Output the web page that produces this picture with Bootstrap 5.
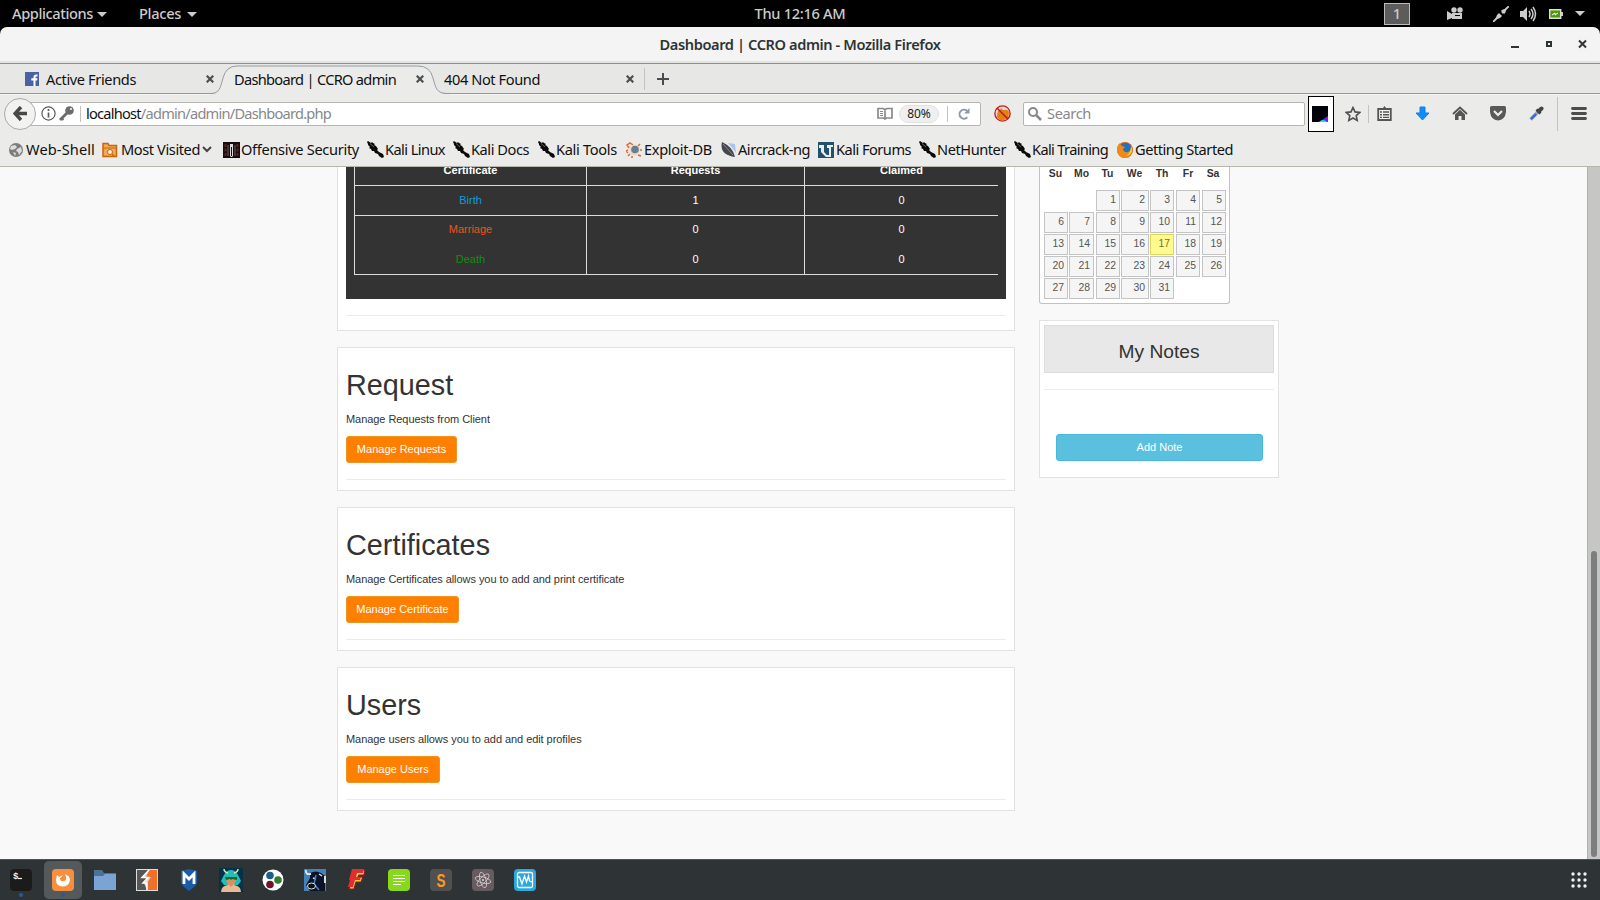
<!DOCTYPE html>
<html lang="en"><head><meta charset="utf-8"><title>Dashboard | CCRO admin</title>
<link href="https://cdn.jsdelivr.net/npm/bootstrap@5.3.0/dist/css/bootstrap.min.css" rel="stylesheet">
<style>
body{width:1600px;height:900px;overflow:hidden;background:#000;font-family:"Noto Sans","Open Sans",sans-serif;font-size:14.6px;line-height:20px;color:#111}
svg{display:block;flex:none}
.lbl{white-space:nowrap;flex:none;display:block}
.sysbar{height:27px;color:#ccc;font-weight:500;padding:0 15px 2px 12px;display:grid;grid-template-columns:1fr 1fr 1fr}
.tri{width:0;height:0;border:5px solid transparent;border-top:5px solid #ccc;border-bottom:0}
.wsnum{width:26px;height:22px;border:1px solid #bbb;background:#5c5c5c;line-height:19px}
.titlebar{height:37px;background:#f4f4f4;border-bottom:1px solid #8e8f8a;border-radius:7px 7px 0 0;color:#2e3436;box-shadow:inset 0 -2px #e2e2df;padding-bottom:2px}
.tabstrip{height:30px;background:#e7e7e5;border-bottom:1px solid #979994;display:grid;grid-template-columns:212px 235px 198px 1fr}
.tabstrip>div{height:30px}
.navtools{height:42px;background:#ebebe9;padding-left:4px;padding-bottom:4px;border-top:1px solid #f4f4f3}
.backbtn{width:32px;height:32px;border-radius:50%;border:1px solid #aaaba5;background:#f2f2f1;z-index:2}
.urlbox{height:24px;background:#fff;border:1px solid #b6b6ae;border-radius:2px}
.sep{width:1px;background:#c2c3bd;flex:none}
.zoomp{width:40px;height:18px;border-radius:9px;background:#efefef;border:1px solid #e2e2e2;font-size:12px;line-height:16px;color:#222}
.bmarks{height:31px;background:#ebebe9;border-bottom:1px solid #b5b6ac;padding-left:9px;display:grid;grid-template-columns:93px 121px 144px 86px 85px 88px 95px 97px 101px 95px 103px 130px;padding-bottom:3px}
.bmarks>div{display:flex;align-items:center}
.bmarks .lbl{margin-left:1px}
.bmarks .lbl,.navtools .lbl{position:relative;margin-top:-1px}
.viewport{height:692px;background:#f9f9f9;overflow:hidden;font-family:"Liberation Sans",Arial,sans-serif;font-size:11px;line-height:16px;color:#333}
.maincol{width:678px;margin-left:337px}
.panel{background:#fff;border:1px solid #e2e2e2;padding:0 8px;margin-bottom:16px;height:144px}
.panel.first{height:164px;border-top:0}
.darkbox{background:#333;height:132px;color:#fff;padding:0 8px}
.certs{display:grid;grid-template-columns:232px 218px 193px;grid-template-rows:19px 30px 30px 28px;border-left:1px solid #ddd;border-bottom:1px solid #ddd;height:108px;text-align:center;width:644px}
.certs>div{border-right:1px solid #ddd;line-height:29px}
.certs>div:nth-child(3n){border-right:0}
.certs .ln{border-bottom:1px solid #ddd}
.certs .hd{line-height:14px;font-weight:bold;margin-top:-4px}
.ruled{height:1px;background:#ebebeb}
.panel h1{font-size:28.8px;line-height:32px;margin:0;padding-top:21px;font-weight:400;color:#333}
.panel p{margin:10px 0 9px;line-height:16px;letter-spacing:-.06px}
.btn.obtn{background:#ff8000;border:1px solid #f0931f;color:#fff;font-size:11px;line-height:15px;height:27px;padding:4px 0;border-radius:3px;display:block;white-space:nowrap}
.sidecol{margin-left:24px;width:240px}
.calbox{width:191px;height:137px;background:#fff;border:1px solid #c2c2c2;border-top:0;border-radius:0 0 3px 3px;font-size:10.4px;color:#555;padding:0 0 0 4px}
.cal{display:grid;grid-template-columns:25px 27px 25px 29px 26px 26px 24px;grid-template-rows:23px repeat(5,22px)}
.cal b{text-align:center;line-height:14px;color:#333;margin-left:-2px}
.cal i{font-style:normal;text-align:right;border:1px solid #c4c4c4;background:#f5f5f5;height:21px;line-height:18px;padding-right:3px;margin-right:1px}
.cal i.c2,.cal i.c5,.cal i.c6{margin-right:2px}.cal i.c7{margin-right:0}
.cal i.now{background:#fffa90;border-color:#dad55e;color:#777620}
.notes{height:158px;margin-top:16px;background:#fff;border:1px solid #e2e2e2;padding:4px}
.notes h4{background:#e8e8e8;border:1px solid #dcdcdc;height:48px;font-size:19.2px;line-height:51px;margin:0 0 16px;font-weight:400}
.btn.nbtn{background:#5bc0de;border:1px solid #46b8da;color:#fff;font-size:11px;line-height:15px;height:27px;width:207px;padding:4px;border-radius:3px;display:block;margin:44px 0 0 12px}
.scroller{width:13px;background:#c6c6c5;border-left:1px solid #b0b2b1;padding:384px 0 0 3px}
.thumb{width:6px;height:306px;border-radius:3px;background:#7b7f80}
.dockbar{height:42px;background:#2e3436;border-top:1px solid #50504e;padding-bottom:2px}
.dk{width:42px;height:40px;display:flex;align-items:center;justify-content:center}
.dk.on>.tile{width:38px;height:38px;border-radius:5px;background:#545a5b;display:flex;align-items:center;justify-content:center}
.dot{left:19px;bottom:3px;width:4px;height:4px;border-radius:50%;background:#215d9c}
</style></head>
<body>
<svg width="0" height="0" class="position-absolute"><defs>
<symbol id="kali" viewBox="0 0 17 17"><path d="M0 1L1 0l3 2 1-1 1 1 2 1-1 1 2 1 2 3-1 1 2 2 4 2 1 3-2 1-3-2-1-2-3-1-1-2-2 0-1-2-2-1 1-1-2-2 0-1z" fill="#0a0a0a"/><path d="M3 2.500l4 3.500" stroke="#888" stroke-width=".7"/></symbol>
<symbol id="tabx" viewBox="0 0 8 8"><path d="M.7.7l6.600 6.600M7.300.7L.7 7.300" stroke="#4c5052" stroke-width="2.200"/></symbol>
</defs></svg>
<div class="sysbar">
 <div class="d-flex align-items-center"><span class="lbl" data-w="81">Applications</span><span class="tri ms-1 mt-1"></span><span class="lbl" data-w="42" style="margin-left:32px">Places</span><span class="tri mt-1" style="margin-left:6px"></span></div>
 <div class="d-flex align-items-center justify-content-center"><span class="lbl" data-w="91" style="margin-left:3px">Thu 12:16 AM</span></div>
 <div class="d-flex align-items-center justify-content-end" style="padding-top:2px">
  <div class="wsnum text-center" style="margin-right:37px">1</div>
  <svg style="margin-right:29px" width="17" height="13" viewBox="0 0 17 13" fill="#ccc"><path d="M0 4l5 3v-1h10v6H5v-1l-5 2z"/><circle cx="7" cy="3" r="2.700"/><circle cx="13" cy="3" r="2.700"/><path d="M8 8.500h5" stroke="#000"/></svg>
  <svg style="margin-right:11px" width="16" height="16" viewBox="0 0 16 16"><path d="M0 16l3-3M13 3l3-3M2.500 13.500L7 9M9 7l4-4" stroke="#ccc" stroke-width="1.800"/><path d="M3 13q0-4 3-6l3 3q-2 3-6 3zM8 5q1-2 5-2 0 4-2 5z" fill="#ccc"/></svg>
  <svg style="margin-right:12px" width="17" height="16" viewBox="0 0 17 16"><path d="M0 5h3l4-4v14L3 11H0z" fill="#ccc"/><path d="M9 5q2 3 0 6M11 3q4 5 0 10M13 1q5 7 0 14" fill="none" stroke="#ccc" stroke-width="1.500"/></svg>
  <svg style="margin-right:12px" width="14" height="10" viewBox="0 0 14 10"><path d="M.7.7h11v8.600H.7z" fill="#4e9a06" stroke="#ddd" stroke-width="1.400"/><path d="M12 3h2v4h-2z" fill="#ccc"/><path d="M3 6l3-2v2l3-2" stroke="#fff" fill="none"/></svg>
  <span class="tri"></span></div>
</div>
<div class="titlebar d-flex align-items-center">
 <div style="width:580px" class="ms-auto text-center d-flex justify-content-center fw-semibold"><span class="lbl" data-w="281">Dashboard | CCRO admin - Mozilla Firefox</span></div>
 <div class="d-flex align-items-center justify-content-end gap-0" style="width:510px;padding-right:13px">
 <svg width="76" height="10" viewBox="0 0 76 10"><path d="M0 8h8" stroke="#2e3436" stroke-width="2"/><path d="M36 3h4v4h-4z" fill="none" stroke="#2e3436" stroke-width="2"/><path d="M68 1.500l7 7m0-7l-7 7" stroke="#2e3436" stroke-width="2"/></svg></div>
</div>
<div class="tabstrip">
 <div class="d-flex align-items-center" style="padding-left:25px"><svg width="14" height="14" viewBox="0 0 14 14"><path fill="#4862a3" d="M0 0h14v14H0z"/><path d="M8.500 14V8.500H6.300V6.300H8.500V5q0-2.500 2.600-2.500h1.400v2h-1q-1 0-1 1v.8h2l-.4 2.200h-1.600V14z" fill="#fff"/></svg><span class="lbl" data-w="90" style="margin-left:7px">Active Friends</span><svg style="margin-left:70px" width="8" height="8"><use href="#tabx"/></svg></div>
 <div class="position-relative d-flex align-items-center">
  <svg class="position-absolute" style="left:-2px;top:0" width="240" height="31" viewBox="0 0 240 31"><path d="M0 30C10 30 10 24 13 14Q16 2 27 2H208Q220 2 223 14C226 24 226 30 240 30v1H0z" fill="#ebebe9"/><path d="M0 29.500C10 29.500 10 24 13 14Q16 2 27 2H208Q220 2 223 14C226 24 226 29.500 238 29.500" fill="none" stroke="#969ba2"/></svg>
  <span class="lbl position-relative" data-w="162" style="margin-left:22px">Dashboard | CCRO admin</span><svg class="position-relative" style="margin-left:20px" width="8" height="8"><use href="#tabx"/></svg></div>
 <div class="d-flex align-items-center"><span class="lbl position-relative" data-w="96" style="margin-left:-3px">404 Not Found</span><svg style="margin-left:86px" width="8" height="8"><use href="#tabx"/></svg><span class="sep ms-auto" style="height:22px"></span></div>
 <div class="d-flex align-items-center" style="padding-left:12px"><svg width="12" height="12"><path d="M6 0v12M0 6h12" stroke="#4a4d4f" stroke-width="2"/></svg></div>
</div>
<div class="navtools d-flex align-items-center">
 <div class="backbtn d-flex align-items-center justify-content-center flex-shrink-0"><svg width="14" height="15" viewBox="0 0 14 15"><path d="M8 1L2 7.500 8 14M2 7.500h12" fill="none" stroke="#484848" stroke-width="3.400"/></svg></div>
 <div class="urlbox d-flex align-items-center" style="width:953px;margin-left:-8px;padding-left:12px">
  <svg width="15" height="15" viewBox="0 0 15 15"><circle cx="7.500" cy="7.500" r="6.600" fill="none" stroke="#5a5a5a" stroke-width="1.200"/><path d="M7.500 6.500v5M7.500 3v2" stroke="#5a5a5a" stroke-width="1.700"/></svg>
  <svg style="margin-left:3px" width="15" height="15" viewBox="0 0 15 15"><path d="M1 14L8 7" stroke="#6c6c6c" stroke-width="2.800"/><circle cx="10.500" cy="4.500" r="4.300" fill="#6c6c6c"/><circle cx="12" cy="3" r="1" fill="#fff"/><path d="M2.500 12l2 2" stroke="#6c6c6c" stroke-width="2"/></svg>
  <span class="sep" style="height:16px;margin:0 5px 0 6px"></span>
  <span class="lbl" data-w="245">localhost<span style="color:#888">/admin/admin/Dashboard.php</span></span>
  <div class="ms-auto d-flex align-items-center">
  <svg width="16" height="13" viewBox="0 0 16 13"><path d="M1 1.500h5l2 1 2-1h5v9.500h-5.500L8 12l-1.500-1H1zM8 2.500V12" fill="none" stroke="#8a8a8a" stroke-width="1.700"/><path d="M3 4.500h3M3 6.500h3M3 8.500h3" stroke="#8a8a8a"/></svg>
  <div class="zoomp text-center" style="margin:0 8px 0 6px">80%</div><span class="sep" style="height:16px"></span>
  <svg style="margin:0 10px 0 10px" width="12" height="12" viewBox="0 0 12 12"><path d="M9.300 9.300A4.500 4.500 0 1 1 9 2.800" fill="none" stroke="#8e9aa6" stroke-width="2"/><path d="M11.500 0v5.500H6z" fill="#8e9aa6"/></svg></div>
 </div>
 <svg style="margin-left:13px" width="17" height="17" viewBox="0 0 17 17"><circle cx="8.500" cy="8.500" r="7.500" fill="#e9ddd9"/><path d="M3 12q0-7 3-7l1-2 2 2q6-1 6 3l-1 5-4 2H6z" fill="#e3820c"/><circle cx="8.500" cy="8.500" r="7.600" fill="none" stroke="#cc1c1c" stroke-width="1.400"/><path d="M3 3l11 11" stroke="#c11" stroke-width="1.500"/></svg>
 <div class="urlbox d-flex align-items-center" style="width:282px;margin-left:12px;padding-left:4px;color:#888"><svg width="14" height="14" viewBox="0 0 14 14"><circle cx="5" cy="5" r="4" fill="none" stroke="#888" stroke-width="2"/><path d="M8 8l5 5" stroke="#888" stroke-width="2.500"/></svg><span class="lbl" data-w="44" style="margin-left:5px">Search</span></div>
 <div class="d-flex align-items-center justify-content-center bg-white" style="width:26px;height:36px;border:1px solid #000;margin-left:3px"><svg width="16" height="16" style="margin-right:2px"><path fill="#02020a" d="M0 0h16v16H0z"/><path fill="#62f" d="M16 10v6H7z"/><path fill="#15e5f5" d="M7 16q4-4 8 0z"/></svg></div>
 <svg style="margin-left:11px" width="16" height="16" viewBox="0 0 16 16"><path d="M8 1.500l2 4.400 4.800.5-3.600 3.200 1 4.800L8 12l-4.200 2.400 1-4.800L1.200 6.400 6 5.900z" fill="none" stroke="#505050" stroke-width="1.600"/></svg>
 <span class="sep" style="height:18px;margin-left:7px"></span>
 <svg style="margin-left:8px" width="15" height="15" viewBox="0 0 15 15"><path d="M1.200 3h12.600v11H1.200z" fill="#f0f0ef" stroke="#555" stroke-width="1.800"/><path d="M4 4V2h2l1.500-2L9 2h2v2z" fill="#555"/><path d="M3 6h2M6 6h6M3 8.700h2M6 8.700h6M3 11.400h2M6 11.400h6" stroke="#555" stroke-width="1.400"/></svg>
 <svg style="margin-left:23px" width="15" height="15" viewBox="0 0 15 15"><path d="M5 1h5v6h4l-6.500 7L1 7h4z" fill="#0a8fff" stroke="#1c7ae0"/></svg>
 <svg style="margin-left:22px" width="16" height="15" viewBox="0 0 16 15"><path d="M1 8l7-6.500L15 8" fill="none" stroke="#555" stroke-width="1.900"/><path d="M3 8.500l5-4.700 5 4.700V14H9.500v-4h-3v4H3z" fill="#555"/></svg>
 <svg style="margin-left:22px" width="16" height="15" viewBox="0 0 16 15"><path d="M1.500 0h13q1.500 0 1.500 1.500V6q-1 8-8 8.500Q1 14 0 6V1.500Q0 0 1.500 0z" fill="#595959"/><path d="M4 5l4 4 4-4" fill="none" stroke="#ededec" stroke-width="2.200"/></svg>
 <svg style="margin-left:23px" width="15" height="15" viewBox="0 0 15 15"><path d="M1.500 13.500l8-8" stroke="#9aa2ae" stroke-width="3.600"/><path d="M2 13l5-5" stroke="#3c62d8" stroke-width="2"/><path d="M7.500 3.500l4 4" stroke="#383838" stroke-width="2.600"/><path d="M10 5L12.500 2.500" stroke="#444" stroke-width="4" stroke-linecap="round"/></svg>
 <span class="sep" style="height:34px;margin-left:13px"></span>
 <svg style="margin-left:13px" width="16" height="13"><path d="M1.500 1.500h13M1.500 6.500h13M1.500 11.500h13" stroke="#4c4c4c" stroke-width="2.800" stroke-linecap="round"/></svg>
</div>
<div class="bmarks">
 <div><svg class="me-1" width="14" height="14" viewBox="0 0 14 14"><circle cx="7" cy="7" r="7" fill="#7d7d7d"/><path d="M2 3l4-1 2 2-2 2-3 1-2-1zM8 6l4-2 1 4-3 4-1-3-2-1zM4 9l3 1-1 3z" fill="#ddd"/></svg><span class="lbl" data-w="69" style="margin-left:-1px">Web-Shell</span></div>
 <div><svg width="16" height="16" viewBox="0 0 16 16"><path d="M1 14.500v-13h5l1 2h7.500v11z" fill="#f3a757" stroke="#c8660c" stroke-width="1.500"/><path d="M1 6h14" stroke="#c8660c"/><circle cx="8" cy="10" r="2.500" fill="#fff3e0" stroke="#c8660c"/><path d="M10 12l3 3" stroke="#c8660c" stroke-width="1.500"/></svg><span class="lbl" data-w="79" style="margin-left:3px">Most Visited</span><svg style="margin-left:2px" width="10" height="7"><path d="M1 1l4 4 4-4" fill="none" stroke="#3f4446" stroke-width="2"/></svg></div>
 <div><svg width="17" height="16" viewBox="0 0 17 16"><path d="M0 0h17v16H0z" fill="#180c0c"/><path d="M2.500 2v12M14.500 2v12" stroke="#5c2020" stroke-width="2" stroke-dasharray="3 1.500"/><path d="M7 2h3v12l-1 1H8l-1-1z" fill="#ddd"/><path d="M8.500 5v9" stroke="#111"/><path d="M5 3v11M12 3v11" stroke="#888" stroke-width=".7"/></svg><span class="lbl" data-w="118">Offensive Security</span></div>
 <div><svg width="17" height="17"><use href="#kali"/></svg><span class="lbl" data-w="60">Kali Linux</span></div>
 <div><svg width="17" height="17"><use href="#kali"/></svg><span class="lbl" data-w="58">Kali Docs</span></div>
 <div><svg width="17" height="17"><use href="#kali"/></svg><span class="lbl" data-w="61">Kali Tools</span></div>
 <div><svg width="16" height="16" viewBox="0 0 16 16"><path d="M3 6L1 3l3-2 3 2M2 8l-2 1 2 2M4 12l-2 2M12 4l2-2M14 8h2M12 13l3 1M6 14v2" fill="none" stroke="#e46a2c" stroke-width="1.500"/><circle cx="8.500" cy="8" r="5.200" fill="#e8d9d0"/><circle cx="9" cy="7.500" r="3.800" fill="#65808e"/></svg><span class="lbl" data-w="68" style="margin-left:2px">Exploit-DB</span></div>
 <div><svg width="16" height="16" viewBox="0 0 16 16"><path d="M7 1l7 1 1 9-3-4z" fill="#adc3ef"/><path d="M1 0q-3 13 13 15Q12 5 1 0z" fill="#44484c"/><path d="M2 2l10 11" stroke="#888"/></svg><span class="lbl" data-w="72">Aircrack-ng</span></div>
 <div><svg width="16" height="16" viewBox="0 0 16 16"><path d="M0 0h16v16H0z" fill="#24506c"/><path d="M1 3h5v7l3 3h2V6h-2V3h6v2h-2v10H8L3 10V6H1z" fill="#e9eef1"/></svg><span class="lbl" data-w="75" style="margin-left:2px">Kali Forums</span></div>
 <div><svg width="17" height="17"><use href="#kali"/></svg><span class="lbl" data-w="69">NetHunter</span></div>
 <div><svg width="17" height="17"><use href="#kali"/></svg><span class="lbl" data-w="76">Kali Training</span></div>
 <div><svg width="16" height="16" viewBox="0 0 16 16"><circle cx="8" cy="8" r="8" fill="#e65b12"/><circle cx="8.500" cy="6.500" r="5.800" fill="#2270c0"/><path d="M0 8Q0 3 3 1q0 2 2 3l3 1-2 2q1 4 5 3 3-1 3-5 2 3 1 6-3 5-8 5-6-1-7-8z" fill="#f08a17"/><path d="M14 4q2 4 0 7-2 3-5 3 5-3 5-10z" fill="#ffd22e"/></svg><span class="lbl" data-w="98" style="margin-left:2px">Getting Started</span></div>
</div>
<div class="viewport d-flex">
 <div class="maincol">
  <div class="panel first"><div class="darkbox"><div class="certs">
   <div class="ln"><div class="hd">Certificate</div></div><div class="ln"><div class="hd">Requests</div></div><div class="ln"><div class="hd">Claimed</div></div>
   <div class="ln" style="color:#0d9ddb">Birth</div><div class="ln">1</div><div class="ln">0</div>
   <div style="color:#e95420;line-height:27px">Marriage</div><div style="line-height:27px">0</div><div style="line-height:27px">0</div>
   <div style="color:#0c920c;line-height:27px">Death</div><div style="line-height:27px">0</div><div style="line-height:27px">0</div></div></div><div class="ruled mt-3"></div></div>
  <div class="panel"><h1>Request</h1><p>Manage Requests from Client</p><button class="btn obtn" style="width:111px">Manage Requests</button><div class="ruled mt-3"></div></div>
  <div class="panel"><h1>Certificates</h1><p>Manage Certificates allows you to add and print certificate</p><button class="btn obtn" style="width:113px">Manage Certificate</button><div class="ruled mt-3"></div></div>
  <div class="panel"><h1>Users</h1><p>Manage users allows you to add and edit profiles</p><button class="btn obtn" style="width:94px">Manage Users</button><div class="ruled mt-3"></div></div>
 </div>
 <div class="sidecol">
  <div class="calbox"><div class="cal">
   <b>Su</b><b>Mo</b><b>Tu</b><b>We</b><b>Th</b><b>Fr</b><b>Sa</b>
   <span></span><span></span><i>1</i><i>2</i><i class="c5">3</i><i class="c6">4</i><i class="c7">5</i>
   <i>6</i><i class="c2">7</i><i>8</i><i>9</i><i class="c5">10</i><i class="c6">11</i><i class="c7">12</i>
   <i>13</i><i class="c2">14</i><i>15</i><i>16</i><i class="c5 now">17</i><i class="c6">18</i><i class="c7">19</i>
   <i>20</i><i class="c2">21</i><i>22</i><i>23</i><i class="c5">24</i><i class="c6">25</i><i class="c7">26</i>
   <i>27</i><i class="c2">28</i><i>29</i><i>30</i><i class="c5">31</i></div></div>
  <div class="notes"><h4 class="text-center">My Notes</h4><div class="ruled"></div><button class="btn nbtn">Add Note</button></div>
 </div>
 <div class="scroller ms-auto"><div class="thumb"></div></div>
</div>
<div class="dockbar d-flex align-items-center">
 <div class="dk position-relative"><svg width="22" height="22"><rect width="22" height="22" rx="4" fill="#1b1b1b"/><text x="3" y="10" font-size="9" font-family="Liberation Mono" font-weight="bold" fill="#eee">$</text><path d="M8 9.500h4" stroke="#eee" stroke-width="1.200"/></svg><span class="dot position-absolute"></span></div>
 <div class="dk on position-relative"><span class="tile"><svg width="22" height="22" viewBox="0 0 22 22"><rect width="22" height="22" rx="4" fill="#f78f3f"/><path d="M5 6l2 2 4-2q-1 2-3 3 0 4 4 3 3-1 2-4l-1-3q5 2 5 6-1 6-7 6.500Q4 17 4 11z" fill="#fff"/></svg></span><span class="dot position-absolute"></span></div>
 <div class="dk"><svg width="22" height="20"><path d="M0 0h8l2 3h12v5H0z" fill="#4a7396"/><path d="M0 6h9l2-2h11v16H0z" fill="#7ba3d4"/></svg></div>
 <div class="dk"><svg width="22" height="22"><path d="M0 0h22v22H0z" fill="#ddd"/><path d="M1 1h12l-6 7h5l-4 6 3 7H1z" fill="#555"/><path d="M13 1h8v20H11V14l4-6h-5z" fill="#f0702a"/><path d="M13 1L6 8.500h6L7 14h4v7" fill="none" stroke="#fff" stroke-width="1.500"/></svg></div>
 <div class="dk"><svg width="18" height="22"><path d="M1 2l8-2 8 2v12q-2 4-8 8-6-4-8-8z" fill="#1c5ba8"/><path d="M4 15V5l5 5 5-5v10" fill="none" stroke="#fff" stroke-width="2.800"/></svg></div>
 <div class="dk"><svg width="24" height="24"><path d="M0 0h24v24H0z" fill="#053247"/><path d="M5 7q3-5 7-5t7 5l3 6-3 4H5l-3-4z" fill="#24bdb9"/><path d="M2 24q0-6 7-7v-4h6v4q7 1 7 7z" fill="#eab990"/><path d="M7 11h10l-1 4-4 4-4-4z" fill="#d9905f"/><path d="M6 9h12v3l-5-1-1 1-1-1-4 1z" fill="#106a25"/><path d="M5 1q0 3 4 4M19 1q0 3-4 4" stroke="#cfe9b0" stroke-width="1.500" fill="none"/></svg></div>
 <div class="dk"><svg width="22" height="22"><circle cx="11" cy="11" r="10.500" fill="#fff"/><circle cx="8" cy="6.500" r="3.800" fill="#1b6288"/><circle cx="16" cy="11" r="3.800" fill="#367b32"/><circle cx="8" cy="15.500" r="3.800" fill="#721225"/></svg></div>
 <div class="dk"><svg width="22" height="22"><path d="M0 0h22v22H0z" fill="#4383ba"/><path d="M6 4q6-3 11 0l4 3v15H6l-4-6 4-7z" fill="#0b1426"/><path d="M2 1q-1 5 5 4" stroke="#e6eef4" fill="none" stroke-width="1.800"/><path d="M9 9l3 1M15 5l3 2" stroke="#dce6ee" stroke-width="1.500"/><path d="M12 6l-2 9 5 6" stroke="#4383ba" fill="none" stroke-width="1.500"/><ellipse cx="7.500" cy="17" rx="4" ry="3" fill="#111" stroke="#ddd"/><path d="M21 7v7" stroke="#ddd" stroke-width="2"/></svg></div>
 <div class="dk"><svg width="20" height="23" viewBox="0 0 20 23"><path d="M5 2h13l-1 5h-5l-1 2h5l-2 5H9l-2 7H2l2-7h1z" fill="#f0d62c" stroke="#8e1620" stroke-width="1.200"/><path d="M5 1h12l-1 4h-6l-1 4h5l-1 3H8l-2 7H1l2-7h-1z" fill="#e12d31"/></svg></div>
 <div class="dk"><svg width="22" height="22"><rect width="22" height="22" rx="4" fill="#88d91e"/><path d="M5 6.500h12M5 9.500h12M5 12.500h12M5 15.500h8" stroke="#fff" stroke-width="1.200"/></svg></div>
 <div class="dk"><svg width="22" height="22"><rect width="22" height="22" rx="4" fill="#505050"/><text x="11" y="17.500" text-anchor="middle" font-size="18" font-family="Liberation Sans" font-weight="bold" fill="#f99b20" textLength="9" lengthAdjust="spacingAndGlyphs">S</text></svg></div>
 <div class="dk"><svg width="22" height="22"><rect width="22" height="22" rx="4" fill="#685b60"/><g fill="none" stroke="#d6ced0" stroke-width=".8"><ellipse cx="11" cy="11" rx="8" ry="3" transform="rotate(15 11 11)"/><ellipse cx="11" cy="11" rx="8" ry="3" transform="rotate(75 11 11)"/><ellipse cx="11" cy="11" rx="8" ry="3" transform="rotate(135 11 11)"/></g><circle cx="11" cy="11" r="1" fill="#ddd"/></svg></div>
 <div class="dk"><svg width="22" height="22"><rect width="22" height="22" rx="4" fill="#2ba9df"/><rect x="3.500" y="3.500" width="15" height="15" rx="1.500" fill="none" stroke="#fff" stroke-width="1.300"/><path d="M3.500 8h2l2.500 7 2.500-8 2 6 2-6 1 5 2.500 1" fill="none" stroke="#fff" stroke-width="1.300"/></svg></div>
 <svg class="ms-auto" style="margin-right:13px" width="16" height="16" fill="#f1f1f1"><circle cx="2" cy="2" r="1.700"/><circle cx="8" cy="2" r="1.700"/><circle cx="14" cy="2" r="1.700"/><circle cx="2" cy="8" r="1.700"/><circle cx="8" cy="8" r="1.700"/><circle cx="14" cy="8" r="1.700"/><circle cx="2" cy="14" r="1.700"/><circle cx="8" cy="14" r="1.700"/><circle cx="14" cy="14" r="1.700"/></svg>
</div>
<script>
// Tighten the tracking of each chrome label so that it fills its allotted width.
document.querySelectorAll('.lbl[data-w]').forEach(function (el) {
  var w = +el.dataset.w;
  el.style.letterSpacing = ((w - el.getBoundingClientRect().width) / el.textContent.length) + 'px';
  el.style.width = w + 'px';
});
</script>
<script src="https://cdn.jsdelivr.net/npm/bootstrap@5.3.0/dist/js/bootstrap.bundle.min.js"></script>
</body></html>
